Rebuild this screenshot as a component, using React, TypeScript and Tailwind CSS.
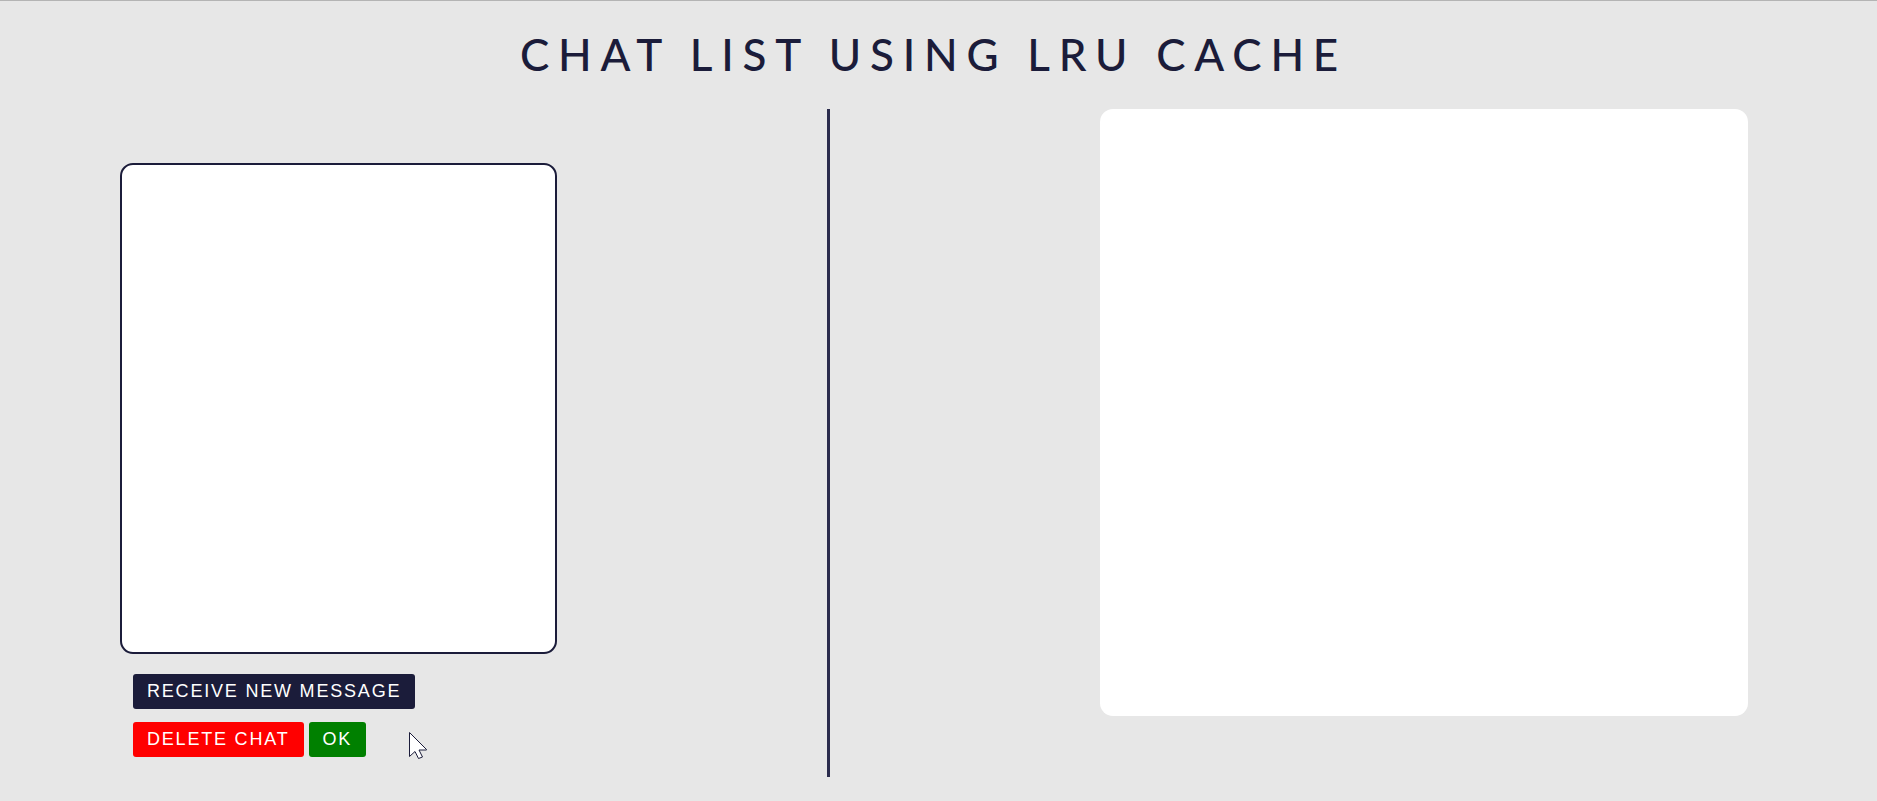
import React from "react";

type ActionButtonProps = {
  label: string;
  tone: string;
};

function ActionButton({ label, tone }: ActionButtonProps) {
  return (
    <button
      type="button"
      className={`h-[35px] rounded-[3px] px-[14px] text-[18px] leading-[21px] tracking-widest text-white uppercase ${tone}`}
    >
      {label}
    </button>
  );
}

function Pointer() {
  return (
    <svg
      className="pointer-events-none absolute top-[10px] left-[276px]"
      width="19"
      height="28"
      viewBox="0 0 19 28"
      aria-hidden="true"
    >
      <path
        d="M0.5 0.5V24.5L6 19.5L9.5 26.5L13.5 25L10 18H17.5V17.5Z"
        fill="#fff"
        stroke="#1b1c3a"
        strokeWidth="1"
      />
    </svg>
  );
}

export default function App() {
  return (
    <div className="flex min-h-screen flex-col border-t border-[#b4b4b4] bg-[#e7e7e7] font-['Liberation_Sans',Arial,sans-serif] text-[#1b1c3a]">
      <header className="pt-[26px] pr-[10px] pb-[28px] text-center">
        <h1 className="font-['Lato',sans-serif] text-[44px] leading-[54px] font-medium tracking-[0.2em] uppercase">
          Chat List Using LRU Cache
        </h1>
      </header>
      <main className="grid grid-cols-[827fr_3px_1047fr] pb-6">
        <section className="pt-[54px] pl-[120px]" aria-label="Chats">
          <div className="h-[491px] w-[437px] rounded-[13px] border-2 border-[#1b1c3a] bg-white" />
          <div className="relative mt-5 flex flex-col gap-[13px] pl-[13px]">
            <div className="flex">
              <ActionButton label="Receive new message" tone="bg-[#1b1c3a]" />
            </div>
            <div className="relative flex gap-[5px]">
              <ActionButton label="Delete chat" tone="bg-[#ff0000]" />
              <ActionButton label="OK" tone="bg-[#008000]" />
              <Pointer />
            </div>
          </div>
        </section>
        <div className="h-[668px] bg-[#2b2c4d]" />
        <section className="pr-[129px] pl-[270px]" aria-label="Conversation">
          <div className="h-[607px] rounded-[13px] bg-white" />
        </section>
      </main>
    </div>
  );
}
